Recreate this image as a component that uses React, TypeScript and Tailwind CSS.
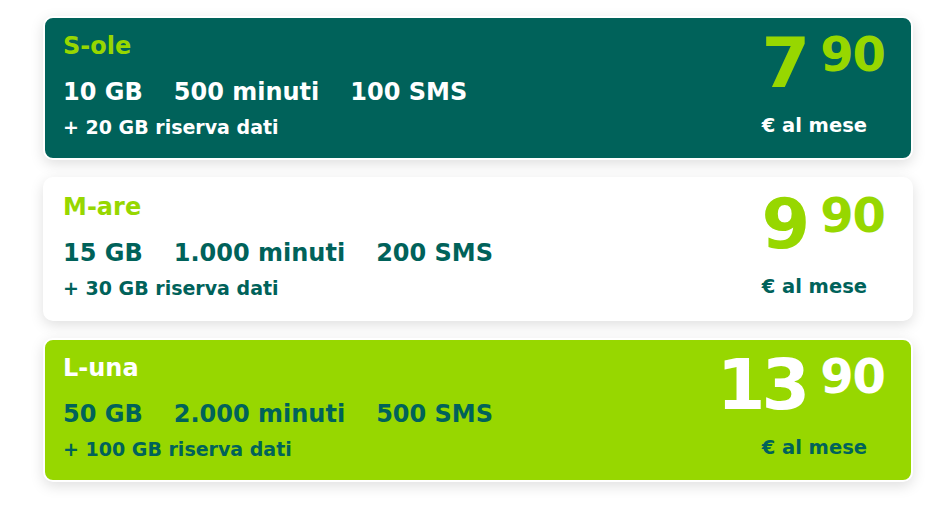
const plans = [
  {
    name: 'S-ole',
    gb: '10 GB',
    min: '500 minuti',
    sms: '100 SMS',
    extra: '+ 20 GB riserva dati',
    euro: '7',
    cents: '90',
    card: 'bg-[#00625a]',
    title: 'text-[#97d700]',
    body: 'text-white',
    price: 'text-[#97d700]',
    month: 'text-white',
  },
  {
    name: 'M-are',
    gb: '15 GB',
    min: '1.000 minuti',
    sms: '200 SMS',
    extra: '+ 30 GB riserva dati',
    euro: '9',
    cents: '90',
    card: 'bg-white',
    title: 'text-[#97d700]',
    body: 'text-[#00625a]',
    price: 'text-[#97d700]',
    month: 'text-[#00625a]',
  },
  {
    name: 'L-una',
    gb: '50 GB',
    min: '2.000 minuti',
    sms: '500 SMS',
    extra: '+ 100 GB riserva dati',
    euro: '13',
    cents: '90',
    card: 'bg-[#97d700]',
    title: 'text-white',
    body: 'text-[#00625a]',
    price: 'text-white',
    month: 'text-[#00625a]',
  },
];

export default function App() {
  return (
    <div
      className="w-[945px] h-[510px] bg-white pt-[16px] pl-[43px]"
      style={{ fontFamily: '"DejaVu Sans", sans-serif' }}
    >
      <div className="w-[870px] flex flex-col gap-[17px]">
        {plans.map((p) => (
          <div
            key={p.name}
            className={`${p.card} h-[144px] rounded-[10px] border-2 border-white shadow-[0_4px_14px_rgba(0,0,0,0.13)] flex justify-between pl-[18px] pr-[26px]`}
          >
            <div className="pt-[13px]">
              <div className={`${p.title} text-[24px] font-bold leading-[30px]`}>{p.name}</div>
              <div className={`${p.body} text-[24px] font-bold leading-[32px] mt-[15px] flex gap-[31px]`}>
                <span>{p.gb}</span>
                <span>{p.min}</span>
                <span>{p.sms}</span>
              </div>
              <div className={`${p.body} text-[19px] font-bold leading-[24px] mt-[7px]`}>{p.extra}</div>
            </div>
            <div className="flex flex-col items-end pt-[10px]">
              <div className={`${p.price} flex items-start font-bold`}>
                <span className="text-[70px] leading-[70px] tracking-[-4px]">{p.euro}</span>
                <span className="text-[48px] leading-[48px] tracking-[-1px] ml-[14px] mt-[2px]">{p.cents}</span>
              </div>
              <div className={`${p.month} text-[19.5px] font-bold leading-[24px] mt-[16px] mr-[18px]`}>€ al mese</div>
            </div>
          </div>
        ))}
      </div>
    </div>
  );
}
